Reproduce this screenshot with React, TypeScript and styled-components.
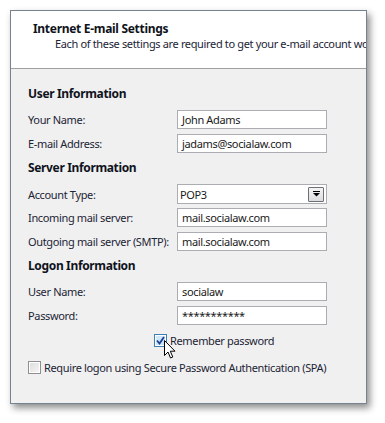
import styled, { createGlobalStyle } from "styled-components";

const GlobalStyle = createGlobalStyle`
	html, body {
		margin: 0;
		padding: 0;
		background: #ffffff;
	}
	body {
		font-family: "Noto Sans", "Open Sans", sans-serif;
		font-size: 11px;
		letter-spacing: -0.35px;
		color: #1c2435;
	}
`;

const Page = styled.div`
	width: 385px;
	height: 423px;
	padding: 10px 0 0 10px;
	box-sizing: border-box;
	overflow: hidden;
`;

const Window = styled.div`
	width: 357px;
	height: 394px;
	box-sizing: border-box;
	border: 1px solid #76838f;
	background: #f0f0f0;
	box-shadow: 3px 4px 7px rgba(0, 0, 0, 0.45);
	display: flex;
	flex-direction: column;
	overflow: hidden;
`;

const Header = styled.header`
	height: 58px;
	flex-shrink: 0;
	background: #ffffff;
	border-bottom: 1px solid #a0a0a0;
	padding: 10px 0 0 22px;
	box-sizing: border-box;
	white-space: nowrap;
	overflow: hidden;
`;

const Title = styled.h1`
	margin: 0;
	font-size: 12px;
	font-weight: 700;
	letter-spacing: -0.3px;
	line-height: 15px;
	color: #0f1320;
`;

const Subtitle = styled.p`
	margin: 0 0 0 22px;
	font-size: 11px;
	line-height: 15px;
	color: #1c2435;
`;

const Body = styled.div`
	padding: 17px 0 0 17px;
	display: flex;
	flex-direction: column;
	gap: 7px;
`;

const Section = styled.section`
	display: flex;
	flex-direction: column;
	gap: 5px;
`;

const Heading = styled.h2`
	margin: 0 0 3px;
	font-size: 12px;
	font-weight: 700;
	line-height: 16px;
	color: #0f1320;
`;

const Row = styled.div`
	display: grid;
	grid-template-columns: 149px 150px;
	align-items: center;
	height: 19px;
`;

const Label = styled.label`
	white-space: nowrap;
	line-height: 19px;
`;

const Field = styled.div<{ $pad?: number }>`
	height: 19px;
	box-sizing: border-box;
	border: 1px solid #abadb3;
	background: #ffffff;
	padding-left: ${(p) => p.$pad ?? 4}px;
	line-height: 17px;
	color: #1a1a1a;
	white-space: nowrap;
	overflow: hidden;
`;

const SelectBox = styled(Field)`
	height: 20px;
	display: flex;
	align-items: center;
	justify-content: space-between;
	padding-right: 2px;
`;

const DropButton = styled.span`
	width: 16px;
	height: 15px;
	box-sizing: border-box;
	border: 1px solid #6b6f75;
	border-radius: 1px;
	background: linear-gradient(#f4f4f4, #dcdcdc);
	display: flex;
	align-items: center;
	justify-content: center;
`;

const CheckRow = styled.div<{ $indent: number; $top: number }>`
	position: relative;
	display: flex;
	align-items: center;
	gap: 3px;
	height: 13px;
	margin-top: ${(p) => p.$top}px;
	margin-left: ${(p) => p.$indent}px;
	white-space: nowrap;
`;

const Box = styled.span<{ $checked?: boolean }>`
	width: 13px;
	height: 13px;
	box-sizing: border-box;
	border: 1px solid ${(p) => (p.$checked ? "#3c7fb1" : "#8f8f8f")};
	background: ${(p) =>
		p.$checked
			? "linear-gradient(135deg, #d7ecf9, #bfe0f5)"
			: "linear-gradient(135deg, #dcdcdc, #f6f6f6)"};
	box-shadow: inset 0 0 0 1px #ffffff;
	display: flex;
	align-items: center;
	justify-content: center;
	flex-shrink: 0;
`;

const Cursor = styled.svg`
	position: absolute;
	left: 10px;
	top: 6px;
`;

function Arrow() {
	return (
		<svg width="9" height="6" viewBox="0 0 9 6">
			<rect x="1" y="0" width="7" height="1" fill="#000" />
			<path d="M1 2 H8 L4.5 5.5 Z" fill="#000" />
		</svg>
	);
}

function Check() {
	return (
		<svg width="9" height="9" viewBox="0 0 9 9">
			<path d="M1 4.5 L3.5 7.5 L8 1" stroke="#1c3f94" strokeWidth="1.8" fill="none" />
		</svg>
	);
}

function TextRow({ label, value }: { label: string; value: string }) {
	return (
		<Row>
			<Label>{label}</Label>
			<Field>{value}</Field>
		</Row>
	);
}

export default function App() {
	return (
		<>
			<GlobalStyle />
			<Page>
				<Window>
					<Header>
						<Title>Internet E-mail Settings</Title>
						<Subtitle>
							Each of these settings are required to get your e-mail account wo
						</Subtitle>
					</Header>
					<Body>
						<Section>
							<Heading>User Information</Heading>
							<TextRow label="Your Name:" value="John Adams" />
							<TextRow label="E-mail Address:" value="jadams@socialaw.com" />
						</Section>
						<Section>
							<Heading>Server Information</Heading>
							<Row>
								<Label>Account Type:</Label>
								<SelectBox $pad={2}>
									POP3
									<DropButton>
										<Arrow />
									</DropButton>
								</SelectBox>
							</Row>
							<TextRow label="Incoming mail server:" value="mail.socialaw.com" />
							<TextRow label="Outgoing mail server (SMTP):" value="mail.socialaw.com" />
						</Section>
						<Section>
							<Heading>Logon Information</Heading>
							<TextRow label="User Name:" value="socialaw" />
							<TextRow label="Password:" value="***********" />
						</Section>
						<CheckRow $indent={126} $top={2}>
							<Box $checked>
								<Check />
							</Box>
							Remember password
							<Cursor width="13" height="20" viewBox="0 0 13 20">
								<path
									d="M0.5 0.5 L0.5 15.5 L4 12 L6.5 18 L8.8 17 L6.3 11.2 L11 11.2 Z"
									fill="#ffffff"
									stroke="#000000"
									strokeWidth="1"
									strokeLinejoin="round"
								/>
							</Cursor>
						</CheckRow>
						<CheckRow $indent={0} $top={7}>
							<Box />
							Require logon using Secure Password Authentication (SPA)
						</CheckRow>
					</Body>
				</Window>
			</Page>
		</>
	);
}
